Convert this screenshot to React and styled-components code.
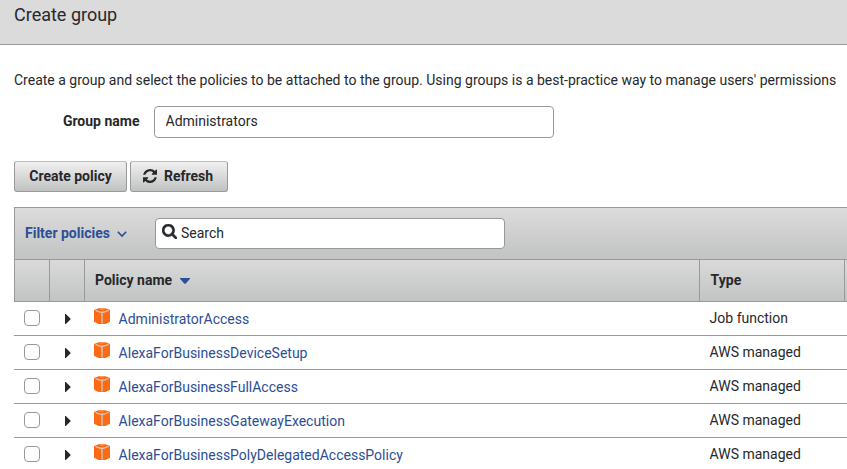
import React from "react";
import styled, { createGlobalStyle } from "styled-components";

const GlobalStyle = createGlobalStyle`
  * { box-sizing: border-box; }
  html, body { margin: 0; background: #fff; overflow: hidden; }
  body, button, input {
    font-family: Roboto, "Liberation Sans", sans-serif;
    font-size: 14px;
    color: #26282b;
  }
`;

const Page = styled.main`
  width: 847px;
  height: 469px;
  overflow: hidden;
  background: #fff;
`;

const Header = styled.header`
  height: 45px;
  padding: 4px 14px 0;
  background: #dbdbdb;
  border-bottom: 1px solid #98999c;
`;

const Title = styled.h1`
  margin: 0;
  font-size: 18px;
  line-height: 22px;
  font-weight: 400;
`;

const Content = styled.section`
  padding: 25px 0 0 14px;
`;

const Description = styled.p`
  margin: 0;
  line-height: 20px;
  white-space: nowrap;
`;

const Field = styled.label`
  display: flex;
  margin-top: 16px;
  height: 32px;
`;

const FieldLabel = styled.span`
  width: 140px;
  padding-right: 14.5px;
  text-align: right;
  font-weight: 700;
  line-height: 31px;
  white-space: nowrap;
`;

const TextInput = styled.input`
  width: 400px;
  height: 32px;
  padding: 0 10px 2px 10.5px;
  border: 1px solid #98999c;
  border-radius: 4px;
  background: #fff;
  outline: none;
`;

const Actions = styled.div`
  display: flex;
  gap: 3px;
  margin-top: 23px;
`;

const Button = styled.button`
  display: flex;
  align-items: center;
  justify-content: center;
  gap: 7px;
  width: ${(p) => p.$width}px;
  height: 31px;
  padding: 0 ${(p) => p.$shift || 0}px 2px 0;
  border: 1px solid #98999c;
  border-top-color: #bcbdbe;
  border-radius: 3px;
  background: linear-gradient(#f0f0f0, #dbdbdb 45%, #c0c2c2);
  font-weight: 700;
  white-space: nowrap;
`;

const Table = styled.div`
  margin-top: 15px;
`;

const Toolbar = styled.div`
  display: flex;
  height: 52px;
  padding: 10px 0 0 10px;
  border: solid #98999c;
  border-width: 1px 0 0 1px;
  background: linear-gradient(#dcdcdc, #c4c5c5 88%);
`;

const FilterLink = styled.a`
  display: flex;
  align-items: center;
  gap: 7px;
  width: 130px;
  height: 30px;
  color: #2c4e96;
  font-weight: 700;
  white-space: nowrap;

  svg { margin-top: 2px; }
`;

const SearchBox = styled.div`
  display: flex;
  align-items: center;
  gap: 4px;
  width: 350px;
  height: 31px;
  padding: 0 0 1px 6px;
  border: 1px solid #98999c;
  border-radius: 4px;
  background: #fff;

  svg { margin-bottom: 3px; }
`;

const columns = "36px 35px 615px 145px 2px";

const HeadRow = styled.div`
  display: grid;
  grid-template-columns: ${columns};
  height: 43px;
  border: solid #98999c;
  border-width: 1px 0 1px 0;
  background: linear-gradient(#dadada, #c2c3c3);
`;

const HeadCell = styled.div`
  display: flex;
  align-items: center;
  gap: 8px;
  padding: 0 0 1px ${(p) => p.$indent || 10}px;
  border: solid #98999c;
  border-width: 0 ${(p) => (p.$last ? 0 : 1)}px 0 ${(p) => (p.$first ? 1 : 0)}px;
  font-weight: 700;
  white-space: nowrap;

  svg { margin-top: 2px; }
`;

const Row = styled.div`
  display: grid;
  grid-template-columns: ${columns};
  height: 34px;
  border-bottom: 1px solid #98999c;
`;

const CheckCell = styled.div`
  padding: 8px 0 0 10px;
`;

const Checkbox = styled.input`
  appearance: none;
  display: block;
  width: 16px;
  height: 16px;
  margin: 0;
  border: 1px solid #98999c;
  border-radius: 4px;
  background: #fff;
`;

const ExpandCell = styled.div`
  padding: 12px 0 0 15px;
  svg { display: block; }
`;

const NameCell = styled.div`
  display: flex;
  gap: 8.6px;
  padding: 5px 0 0 9px;
`;

const PolicyLink = styled.a`
  padding-top: 2px;
  line-height: 20px;
  color: #2c4e96;
  white-space: nowrap;
`;

const TypeCell = styled.div`
  padding: 6px 0 0 9.6px;
  line-height: 20px;
  white-space: nowrap;
`;

const RefreshIcon = () => (
  <svg width="14" height="14" viewBox="0 128 1536 1536" fill="#26282b">
    <path d="M1511 1056q0 5-1 7-64 268-268 434.5t-478 166.5q-146 0-282.5-55t-243.5-157l-129 129q-19 19-45 19t-45-19-19-45v-448q0-26 19-45t45-19h448q26 0 45 19t19 45-19 45l-137 137q71 66 161 102t187 36q134 0 250-65t186-179q11-17 53-117 8-23 30-23h192q13 0 22.5 9.5t9.5 22.5zm25-800v448q0 26-19 45t-45 19h-448q-26 0-45-19t-19-45 19-45l138-138q-148-137-349-137-134 0-250 65t-186 179q-11 17-53 117-8 23-30 23h-199q-13 0-22.5-9.5t-9.5-22.5v-7q65-268 270-434.5t480-166.5q146 0 284 55.5t245 156.5l130-129q19-19 45-19t45 19 19 45z" />
  </svg>
);

const SearchIcon = () => (
  <svg width="15" height="15" viewBox="0 128 1664 1664" fill="#26282b">
    <path stroke="#26282b" strokeWidth="50" d="M1152 832q0-185-131.5-316.5t-316.5-131.5-316.5 131.5-131.5 316.5 131.5 316.5 316.5 131.5 316.5-131.5 131.5-316.5zm512 832q0 52-38 90t-90 38q-54 0-90-38l-343-342q-179 124-399 124-143 0-273.5-55.5t-225-150-150-225-55.5-273.5 55.5-273.5 150-225 225-150 273.5-55.5 273.5 55.5 225 150 150 225 55.5 273.5q0 220-124 399l343 343q37 37 37 90z" />
  </svg>
);

const ChevronIcon = () => (
  <svg width="10" height="8" viewBox="0 0 10 8" fill="none" stroke="#2c4e96" strokeWidth="1.6">
    <path d="M0.8 1.8 5 6 9.2 1.8" />
  </svg>
);

const SortIcon = () => (
  <svg width="10" height="6" viewBox="0 0 10 6" fill="#2c4e96">
    <path d="M0 0h10v.8L6 5.2q-1 1-2 0L0 .8z" />
  </svg>
);

const ExpandIcon = () => (
  <svg width="6" height="10" viewBox="0 0 6 10" fill="#26282b">
    <path d="M0 0h.8L5.4 4.4q.5.6 0 1.2L.8 10H0z" />
  </svg>
);

const PolicyIcon = () => (
  <svg width="16" height="18" viewBox="0 0 16 18">
    <path d="M0 3 4.5 1.2h7L16 3v11.8L11.5 17h-7L0 14.8z" fill="#fd6a16" />
    <path
      d="M1.5 3.5 6 5.2h4l4.500-1.700M8 5v11.500"
      fill="none"
      stroke="#dccbc0"
      strokeWidth="1.3"
    />
    <path d="M6.500 2h3" stroke="#f7a878" strokeWidth="0.8" />
  </svg>
);

const policies = [
  ["AdministratorAccess", "Job function"],
  ["AlexaForBusinessDeviceSetup", "AWS managed"],
  ["AlexaForBusinessFullAccess", "AWS managed"],
  ["AlexaForBusinessGatewayExecution", "AWS managed"],
  ["AlexaForBusinessPolyDelegatedAccessPolicy", "AWS managed"],
];

export default function App() {
  return (
    <Page>
      <GlobalStyle />
      <Header>
        <Title>Create group</Title>
      </Header>
      <Content>
        <Description>
          Create a group and select the policies to be attached to the group. Using groups is a
          best-practice way to manage users' permissions
        </Description>
        <Field>
          <FieldLabel>Group name</FieldLabel>
          <TextInput defaultValue="Administrators" />
        </Field>
        <Actions>
          <Button $width={113}>Create policy</Button>
          <Button $width={98} $shift={2}>
            <RefreshIcon />
            Refresh
          </Button>
        </Actions>
        <Table>
          <Toolbar>
            <FilterLink>
              Filter policies
              <ChevronIcon />
            </FilterLink>
            <SearchBox>
              <SearchIcon />
              Search
            </SearchBox>
          </Toolbar>
          <HeadRow>
            <HeadCell $first />
            <HeadCell />
            <HeadCell>
              Policy name
              <SortIcon />
            </HeadCell>
            <HeadCell $indent={10.6}>Type</HeadCell>
            <HeadCell $last />
          </HeadRow>
          {policies.map(([name, type]) => (
            <Row key={name}>
              <CheckCell>
                <Checkbox type="checkbox" aria-label={name} />
              </CheckCell>
              <ExpandCell>
                <ExpandIcon />
              </ExpandCell>
              <NameCell>
                <PolicyIcon />
                <PolicyLink>{name}</PolicyLink>
              </NameCell>
              <TypeCell>{type}</TypeCell>
            </Row>
          ))}
        </Table>
      </Content>
    </Page>
  );
}
